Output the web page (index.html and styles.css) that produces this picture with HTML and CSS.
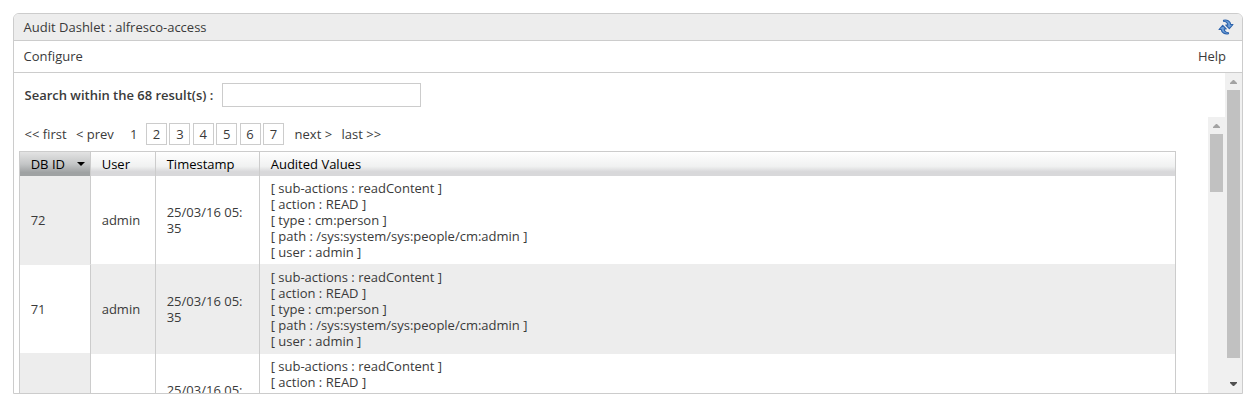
FILE: index.html
```html
<!DOCTYPE html>
<html lang="en">
<head>
<meta charset="utf-8">
<title>Audit Dashlet</title>
<link rel="stylesheet" href="styles.css">
</head>
<body>
<section class="dashlet">
  <header class="title">
    <span class="title-text">Audit Dashlet : alfresco-access</span>
    <svg class="refresh" width="16" height="16" viewBox="0 0 16 16">
      <g fill="#6fa0d8" stroke="#2c62ab" stroke-width="1.1" stroke-linejoin="round">
        <path d="M5.500 1.200C9.500 .4 12.500 2.500 12.700 5.500H15L11.300 9.600 7.800 6H9.800C9.700 4 8 2.500 5.500 2.200Z"/>
        <path d="M10.500 14.800C6.500 15.600 3.500 13.500 3.300 10.500H1L4.700 6.400 8.200 10H6.200C6.300 12 8 13.500 10.500 13.800Z"/>
      </g>
    </svg>
  </header>
  <nav class="toolbar"><span class="configure">Configure</span><span class="help">Help</span></nav>
  <div class="body">
    <div class="content">
      <div class="search">
        <label class="search-label" for="q">Search within the 68 result(s) :</label>
        <input class="search-input" id="q" type="text">
      </div>
      <div class="results">
        <div class="list">
          <div class="pager">
            <span class="first">&lt;&lt; first</span><span class="prev">&lt; prev</span><span class="current">1</span>
            <span class="pages"><a class="page">2</a><a class="page">3</a><a class="page">4</a><a class="page">5</a><a class="page">6</a><a class="page">7</a></span>
            <span class="next">next &gt;</span><span class="last">last &gt;&gt;</span>
          </div>
          <div class="table">
            <div class="row head">
              <div class="cell sorted">DB ID<svg class="sort" width="8" height="4" viewBox="0 0 8 4"><path d="M0 0H8L4 4Z"/></svg></div>
              <div class="cell">User</div><div class="cell">Timestamp</div><div class="cell">Audited Values</div>
            </div>
            <div class="row">
              <div class="cell sorted">72</div><div class="cell">admin</div><div class="cell">25/03/16 05:<br>35</div>
              <div class="cell values">[ sub-actions : readContent ]<br>[ action : READ ]<br>[ type : cm:person ]<br><span class="path">[ path : /sys:system/sys:people/cm:admin ]</span><br>[ user : admin ]</div>
            </div>
            <div class="row even">
              <div class="cell sorted">71</div><div class="cell">admin</div><div class="cell">25/03/16 05:<br>35</div>
              <div class="cell values">[ sub-actions : readContent ]<br>[ action : READ ]<br>[ type : cm:person ]<br><span class="path">[ path : /sys:system/sys:people/cm:admin ]</span><br>[ user : admin ]</div>
            </div>
            <div class="row clipped">
              <div class="cell sorted"></div><div class="cell"></div><div class="cell">25/03/16 05:</div>
              <div class="cell values">[ sub-actions : readContent ]<br>[ action : READ ]</div>
            </div>
          </div>
        </div>
        <div class="scrollbar inner">
          <svg class="arrow" width="17" height="17" viewBox="0 0 17 17"><path class="arrow-up" d="M5 11V10L8 7H9L12 10V11Z"/></svg>
          <div class="thumb"></div>
        </div>
      </div>
    </div>
    <div class="scrollbar outer">
      <svg class="arrow" width="17" height="17" viewBox="0 0 17 17"><path class="arrow-up" d="M5 11V10L8 7H9L12 10V11Z"/></svg>
      <div class="thumb"></div>
      <svg class="arrow bottom" width="17" height="17" viewBox="0 0 17 17"><path class="arrow-down" d="M5 6H12V7L9 10H8L5 7Z"/></svg>
    </div>
  </div>
</section>
</body>
</html>
```
FILE: styles.css
```css
* { box-sizing: border-box; }
body { margin: 0; padding: 13px; background: #fff; font: 13px/16px "Open Sans", sans-serif; color: #3a3a3a; overflow: hidden; }
.dashlet { width: 1230px; height: 381px; border: 1px solid #ccc; border-radius: 6px 6px 0 0; overflow: hidden; white-space: nowrap; }
.title { display: flex; justify-content: space-between; height: 27px; padding: 5px 8px 0 9.6px; background: #ededed; border-bottom: 1px solid #ccc; }
.toolbar { display: flex; justify-content: space-between; height: 32px; padding: 7px 16px 0 9.6px; border-bottom: 1px solid #ccc; }
.body { display: flex; height: 320px; }
.content { width: 1211px; }
.search { display: flex; height: 44px; padding: 10px 0 0 10.6px; }
.search-label { width: 197.4px; padding-top: 4px; font-weight: 600; letter-spacing: -0.02px; }
.search-input { width: 199px; height: 24px; border: 1px solid #ccc; padding: 0; }
.results { display: flex; height: 276px; overflow: hidden; }
.list { width: 1194px; padding-left: 5px; }
.pager { display: flex; height: 34px; padding: 6px 0 0 5.6px; line-height: 22px; }
.first { width: 51.4px; }
.prev { width: 54px; }
.current { width: 16px; }
.pages { display: flex; gap: 2.4px; width: 148.6px; }
.page { width: 21px; height: 22px; border: 1px solid #ccc; line-height: 21px; text-align: center; }
.next { width: 47px; }
.table { width: 1157px; border: solid #ccc; border-width: 1px 1px 0; }
.row { display: grid; grid-template-columns: 71px 65px 104px 1fr; height: 89px; background: #fff; }
.cell { display: flex; align-items: center; padding-left: 10.7px; border-right: 1px solid #ccc; }
.cell:last-child { border-right: 0; }
.row .sorted { background: #ededed; }
.even { background: #ededed; }
.even .sorted { background: #fff; border-top: 1px solid #ededed; }
.row:nth-child(2) { height: 88px; }
.row.even { height: 90px; padding-bottom: 1px; background: linear-gradient(to right, #ededed 70px, #ccc 70px, #ccc 71px, #ededed 71px, #ededed 135px, #ccc 135px, #ccc 136px, #ededed 136px, #ededed 239px, #ccc 239px, #ccc 240px, #ededed 240px); }
.values { display: block; padding-top: 4px; }
.even .values { padding-top: 5px; }
.clipped .cell { align-items: flex-start; padding-top: 28px; }
.clipped .values { padding-top: 4px; }
.row.head { height: 24px; background: linear-gradient(#fff, #f0f1f1 60%, #d8d8da 82%, #d8d8da); color: #000; }
.head .sorted { background: linear-gradient(#e3e3e3, #c4c6c7 50%, #9fa2a3 85%, #9fa2a3); }
.sort { margin-left: 12px; }
.scrollbar { width: 17px; background: #f0f0f0; }
.arrow { display: block; fill: #a3a3a3; }
.arrow-down { fill: #505050; }
.thumb { width: 13px; height: 58px; margin: 0 2px; background: #c1c1c1; }
.outer .thumb { height: 268px; }
.bottom { margin-top: 18px; }
```
